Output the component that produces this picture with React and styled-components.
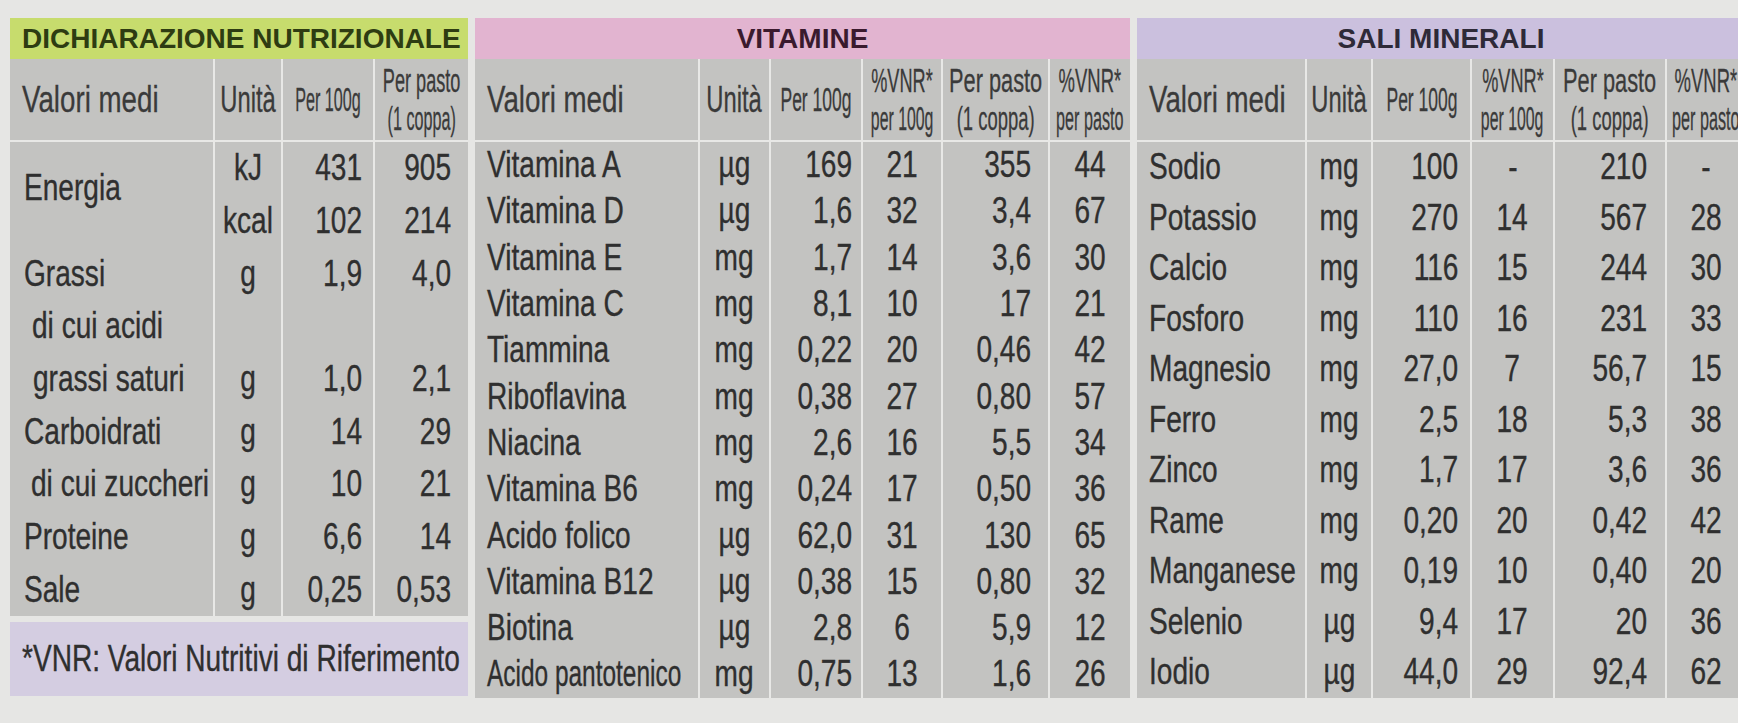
import React from "react";
import styled, { createGlobalStyle } from "styled-components";

const LINE = "#e8e8e6";
// the print face is a condensed grotesque; no narrow font is installed,
// so regular Liberation Sans is squeezed horizontally
const NARROW = 0.78;

const GlobalStyle = createGlobalStyle`
  html, body {
    margin: 0;
    padding: 0;
    background: #e6e6e4;
  }
  body {
    width: 1738px;
    height: 723px;
    overflow: hidden;
    font-family: "Liberation Sans", Arial, sans-serif;
    color: #2f2f2f;
  }
`;

const Page = styled.div`
  display: flex;
  align-items: flex-start;
  gap: 7px;
  padding: 18px 0 0 10px;
  height: 723px;
  box-sizing: border-box;
`;

const Panel = styled.section`
  display: flex;
  flex-direction: column;
  flex: none;
  width: ${(p) => p.$width}px;
`;

const TitleBar = styled.div`
  height: 41px;
  display: flex;
  align-items: center;
  justify-content: ${(p) => (p.$left ? "flex-start" : "center")};
  padding: 0 12px;
  box-sizing: border-box;
  background: ${(p) => p.$bg};
  color: ${(p) => p.$ink};
  font-weight: 700;
  font-size: 28px;
  white-space: nowrap;
`;

const Grid = styled.div`
  display: grid;
  grid-template-columns: ${(p) => p.$cols};
  grid-template-rows: 83px;
  grid-auto-rows: ${(p) => p.$row}px;
  background: #c3c3c1;
`;

const HeadCell = styled.div`
  display: flex;
  flex-direction: column;
  justify-content: center;
  align-items: ${(p) => (p.$left ? "flex-start" : "center")};
  padding-left: ${(p) => (p.$left ? 12 : 0)}px;
  border-bottom: 2px solid ${LINE};
  border-left: ${(p) => (p.$first ? "none" : `2px solid ${LINE}`)};
  box-sizing: border-box;
  line-height: 38px;
  color: #3a3a3a;
  white-space: nowrap;
  min-width: 0;
  -webkit-text-stroke: 0.3px currentColor;
`;

const Squeeze = styled.span`
  display: inline-block;
  font-size: ${(p) => (p.$size ? `${p.$size}px` : "inherit")};
  transform: scaleX(${(p) => p.$sx});
  transform-origin: ${(p) => p.$origin || "center"};
`;

const justify = { left: "flex-start", center: "center", right: "flex-end" };

const Cell = styled.div`
  display: flex;
  align-items: center;
  justify-content: ${(p) => justify[p.$align]};
  padding-left: ${(p) => (p.$align === "left" ? p.$pad : 0)}px;
  padding-right: ${(p) => (p.$align === "right" ? p.$pad : 0)}px;
  padding-bottom: ${(p) => p.$lift || 0}px;
  border-left: ${(p) => (p.$first ? "none" : `2px solid ${LINE}`)};
  box-sizing: border-box;
  grid-row: ${(p) => (p.$span ? `span ${p.$span}` : "auto")};
  font-size: 36px;
  white-space: nowrap;
  min-width: 0;
  -webkit-text-stroke: 0.35px currentColor;
`;

const Footer = styled.div`
  margin-top: 6px;
  height: 74px;
  display: flex;
  align-items: center;
  padding-left: 12px;
  background: #d4cde1;
  font-size: 36px;
  white-space: nowrap;
  -webkit-text-stroke: 0.35px currentColor;
`;

const Text = ({ children, align = "left", sx = 1 }) => (
  <Squeeze $sx={NARROW * sx} $origin={align}>
    {children}
  </Squeeze>
);

// header labels: [text, font size, horizontal scale]
const valori = { left: true, lines: [["Valori medi", 36, 0.77]] };
const unita = { lines: [["Unità", 36, 0.66]] };

const nutriHead = [
  valori,
  unita,
  { lines: [["Per 100g", 33, 0.49]] },
  { lines: [["Per pasto", 33, 0.55], ["(1 coppa)", 33, 0.49]] },
];

const wideHead = [
  valori,
  unita,
  { lines: [["Per 100g", 33, 0.53]] },
  { lines: [["%VNR*", 33, 0.55], ["per 100g", 33, 0.48]] },
  { lines: [["Per pasto", 33, 0.66], ["(1 coppa)", 33, 0.56]] },
  { lines: [["%VNR*", 33, 0.56], ["per pasto", 33, 0.49]] },
];

const nutriCols = [
  { align: "left", pad: 14 },
  { align: "center" },
  { align: "right", pad: 11 },
  { align: "right", pad: 17 },
];

const vitCols = [
  { align: "left", pad: 12 },
  { align: "center" },
  { align: "right", pad: 9 },
  { align: "center" },
  { align: "right", pad: 17 },
  { align: "center" },
];

const minCols = [
  { align: "left", pad: 12 },
  { align: "center" },
  { align: "right", pad: 12 },
  { align: "center" },
  { align: "right", pad: 18 },
  { align: "center" },
];

const vitamine = [
  ["Vitamina A", "µg", "169", "21", "355", "44"],
  ["Vitamina D", "µg", "1,6", "32", "3,4", "67"],
  ["Vitamina E", "mg", "1,7", "14", "3,6", "30"],
  ["Vitamina C", "mg", "8,1", "10", "17", "21"],
  ["Tiammina", "mg", "0,22", "20", "0,46", "42"],
  ["Riboflavina", "mg", "0,38", "27", "0,80", "57"],
  ["Niacina", "mg", "2,6", "16", "5,5", "34"],
  ["Vitamina B6", "mg", "0,24", "17", "0,50", "36"],
  ["Acido folico", "µg", "62,0", "31", "130", "65"],
  ["Vitamina B12", "µg", "0,38", "15", "0,80", "32"],
  ["Biotina", "µg", "2,8", "6", "5,9", "12"],
  ["Acido pantotenico", "mg", "0,75", "13", "1,6", "26"],
];

const minerali = [
  ["Sodio", "mg", "100", "-", "210", "-"],
  ["Potassio", "mg", "270", "14", "567", "28"],
  ["Calcio", "mg", "116", "15", "244", "30"],
  ["Fosforo", "mg", "110", "16", "231", "33"],
  ["Magnesio", "mg", "27,0", "7", "56,7", "15"],
  ["Ferro", "mg", "2,5", "18", "5,3", "38"],
  ["Zinco", "mg", "1,7", "17", "3,6", "36"],
  ["Rame", "mg", "0,20", "20", "0,42", "42"],
  ["Manganese", "mg", "0,19", "10", "0,40", "20"],
  ["Selenio", "µg", "9,4", "17", "20", "36"],
  ["Iodio", "µg", "44,0", "29", "92,4", "62"],
];

// first cell may be indented (sub item) or span two rows (Energia)
const nutrizionale = [
  { cells: [{ t: "Energia", span: 2, lift: 14 }, "kJ", "431", "905"] },
  { cells: ["kcal", "102", "214"], offset: 1 },
  { cells: ["Grassi", "g", "1,9", "4,0"] },
  { cells: [{ t: "di cui acidi", indent: 8 }, "", "", ""] },
  { cells: [{ t: "grassi saturi", indent: 9 }, "g", "1,0", "2,1"] },
  { cells: ["Carboidrati", "g", "14", "29"] },
  { cells: [{ t: "di cui zuccheri", indent: 7 }, "g", "10", "21"] },
  { cells: ["Proteine", "g", "6,6", "14"] },
  { cells: ["Sale", "g", "0,25", "0,53"] },
];

const Header = ({ labels }) =>
  labels.map((h, i) => (
    <HeadCell key={i} $first={i === 0} $left={h.left}>
      {h.lines.map(([text, size, sx]) => (
        <Squeeze key={text} $size={size} $sx={sx} $origin={h.left ? "left" : "center"}>
          {text}
        </Squeeze>
      ))}
    </HeadCell>
  ));

const SimpleTable = ({ cols, widths, labels, rows, rowHeight }) => (
  <Grid $cols={widths.map((w) => `${w}px`).join(" ")} $row={rowHeight}>
    <Header labels={labels} />
    {rows.map((r) =>
      r.map((v, i) => (
        <Cell key={`${r[0]}-${i}`} $first={i === 0} $align={cols[i].align} $pad={cols[i].pad}>
          <Text align={cols[i].align} sx={v.length > 15 ? 0.87 : 1}>
            {v}
          </Text>
        </Cell>
      ))
    )}
  </Grid>
);

const NutriTable = () => (
  <Grid $cols="203px 68px 92px 95px" $row={52.7}>
    <Header labels={nutriHead} />
    {nutrizionale.map((row, r) =>
      row.cells.map((c, j) => {
        const col = j + (row.offset || 0);
        const cfg = nutriCols[col];
        const item = typeof c === "string" ? { t: c } : c;
        return (
          <Cell
            key={`${r}-${j}`}
            $first={col === 0}
            $align={cfg.align}
            $pad={(cfg.pad || 0) + (item.indent || 0)}
            $span={item.span}
            $lift={item.lift}
          >
            <Text align={cfg.align}>{item.t}</Text>
          </Cell>
        );
      })
    )}
  </Grid>
);

export default function App() {
  return (
    <>
      <GlobalStyle />
      <Page>
        <Panel $width={458}>
          <TitleBar $left $bg="#c7dc6d" $ink="#2e3c12">
            DICHIARAZIONE NUTRIZIONALE
          </TitleBar>
          <NutriTable />
          <Footer>
            <Text>*VNR: Valori Nutritivi di Riferimento</Text>
          </Footer>
        </Panel>

        <Panel $width={655}>
          <TitleBar $bg="#e2b4d0" $ink="#3a1a2e">
            VITAMINE
          </TitleBar>
          <SimpleTable
            widths={[223, 71, 92, 80, 107, 82]}
            cols={vitCols}
            labels={wideHead}
            rows={vitamine}
            rowHeight={46.3}
          />
        </Panel>

        <Panel $width={608}>
          <TitleBar $bg="#cbc0de" $ink="#2e2a38">
            SALI MINERALI
          </TitleBar>
          <SimpleTable
            widths={[168, 66, 99, 83, 112, 80]}
            cols={minCols}
            labels={wideHead}
            rows={minerali}
            rowHeight={50.5}
          />
        </Panel>
      </Page>
    </>
  );
}
